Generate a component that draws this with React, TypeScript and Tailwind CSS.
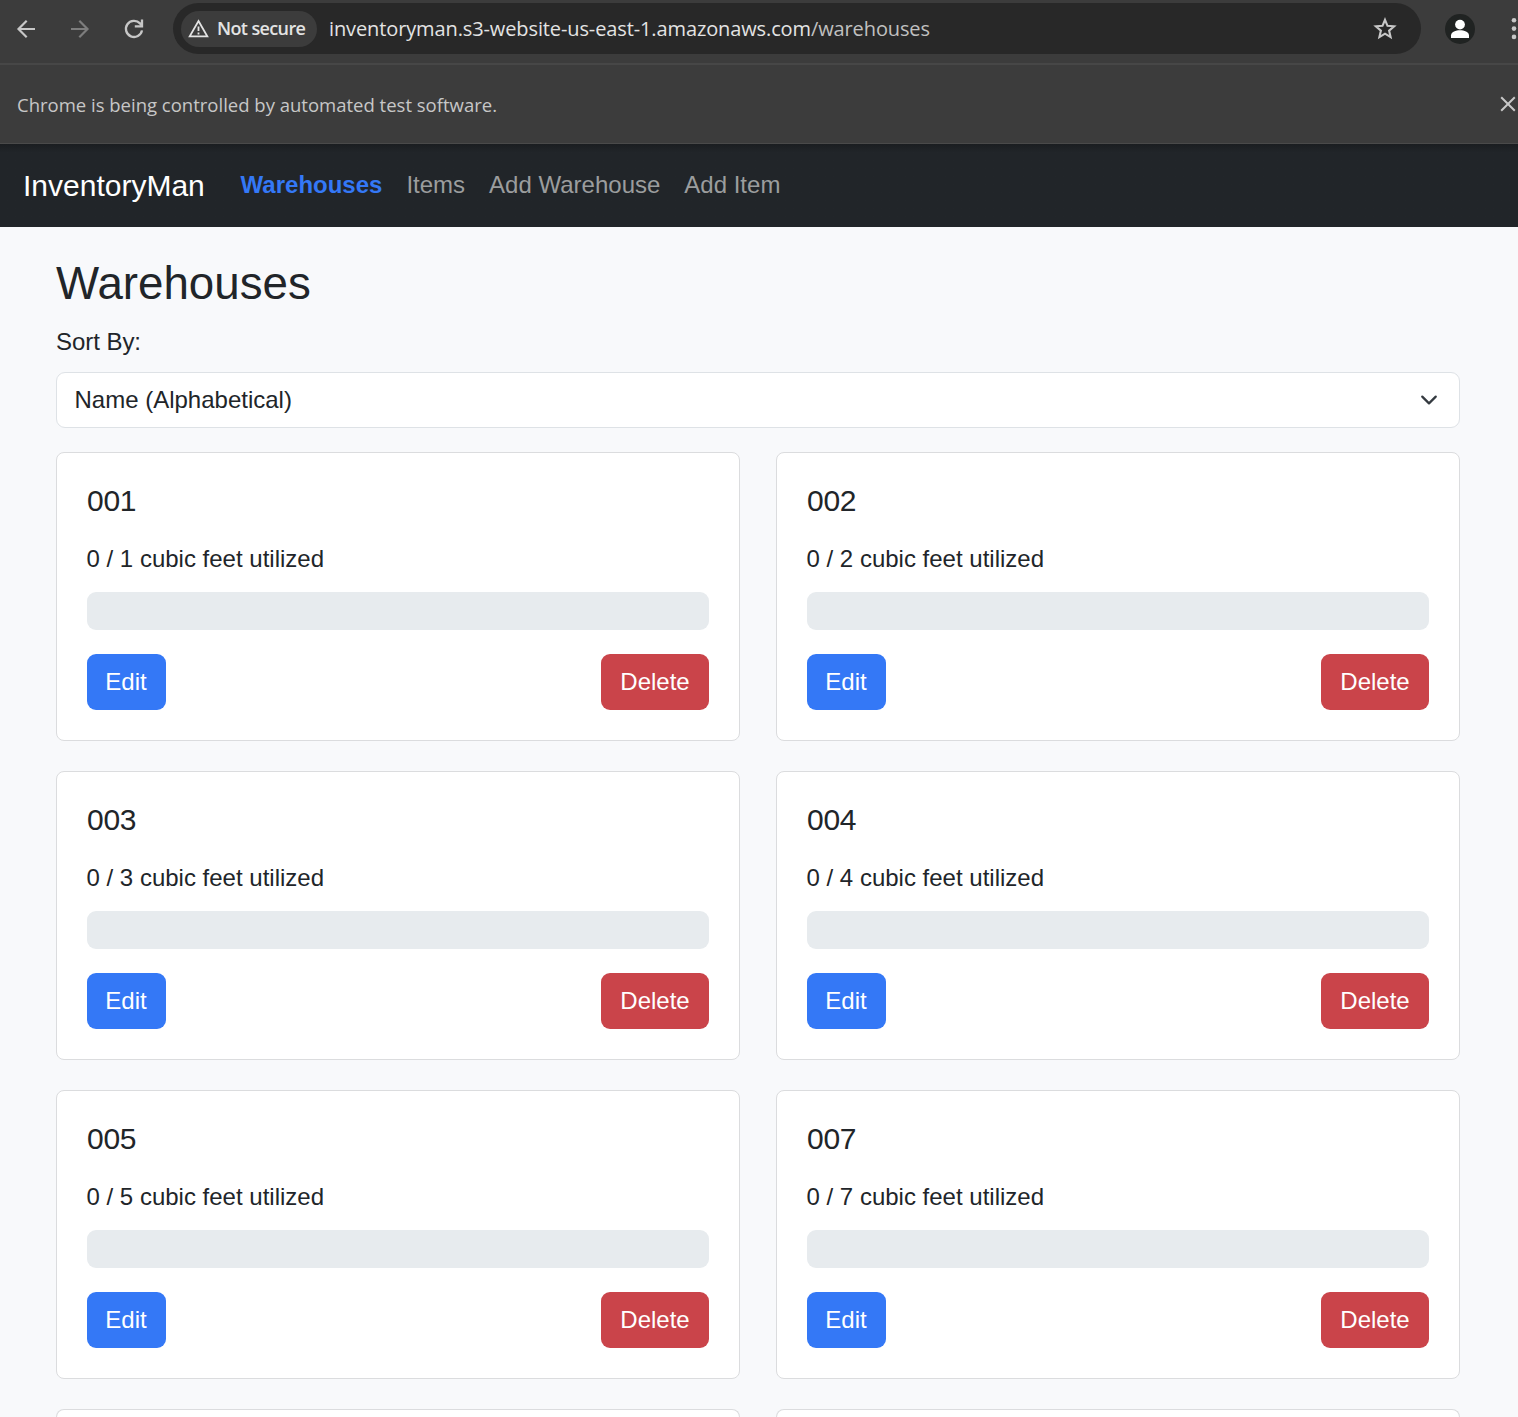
const warehouses = [
  { name: "001", capacity: 1 },
  { name: "002", capacity: 2 },
  { name: "003", capacity: 3 },
  { name: "004", capacity: 4 },
  { name: "005", capacity: 5 },
  { name: "007", capacity: 7 },
];

function Toolbar() {
  return (
    <div className="flex h-[65px] items-start border-b-2 border-[#474747] bg-[#3c3c3c] font-['Open_Sans',sans-serif]">
      <div className="flex h-[57px] w-[173px] shrink-0 items-center pl-[11px]">
        <svg className="h-[30px] w-[30px]" viewBox="0 0 30 30" fill="none" stroke="#c7c7c7" strokeWidth="2.2">
          <path d="M24 15H7.5M15.7 6.8 7.5 15l8.2 8.2" />
        </svg>
        <svg className="ml-6 h-[30px] w-[30px]" viewBox="0 0 30 30" fill="none" stroke="#7d7d7d" strokeWidth="2.2">
          <path d="M6 15h16.5M14.3 6.8l8.2 8.2-8.2 8.2" />
        </svg>
        <svg className="ml-6 h-[30px] w-[30px]" viewBox="0 0 30 30" fill="none" stroke="#c7c7c7" strokeWidth="2.3">
          <path d="M23 16.4A8.1 8.1 0 1 1 21 9.4l1.8 2" />
          <path d="M23 5.6v6.8h-7.2" />
        </svg>
      </div>
      <div className="mt-[3px] flex h-[51px] w-[1248px] shrink-0 items-center rounded-full bg-[#282828] pl-[8px]">
        <div className="flex h-[36px] w-[136px] items-center rounded-full bg-[#3c3c3c] pl-[7px]">
          <svg className="h-[20px] w-[21px] shrink-0" viewBox="0 0 21 20" fill="none" stroke="#e3e3e3" strokeWidth="1.8">
            <path d="M10.5 2 19.3 17.3H1.7Z" />
            <path d="M10.5 7.5v4.6M10.5 13.5v2" />
          </svg>
          <span className="ml-[8px] text-[18px] font-semibold tracking-[-0.62px] whitespace-nowrap text-[#e3e3e3]">Not secure</span>
        </div>
        <span className="ml-[12px] text-[20px] tracking-[-0.115px] whitespace-nowrap text-[#e3e3e3]">
          inventoryman.s3-website-us-east-1.amazonaws.com<span className="text-[#c0c0c0]">/warehouses</span>
        </span>
        <svg className="mr-[24px] ml-auto h-[24px] w-[24px]" viewBox="0 0 24 24" fill="none" stroke="#c7c7c7" strokeWidth="2.1">
          <path d="M12 2.8 14.5 8.8l6.6.5-5 4.3 1.5 6.5-5.6-3.4-5.6 3.4 1.5-6.5-5-4.3 6.6-.5Z" />
        </svg>
      </div>
      <div className="mt-[14px] ml-[24px] h-[30px] w-[30px] shrink-0 overflow-hidden rounded-full bg-[#202322]">
        <svg viewBox="0 0 30 30" fill="#fff">
          <circle cx="15" cy="10.6" r="4.9" />
          <path d="M6 24v-2.6C6 18 11 16.3 15 16.3s9 1.7 9 5.1V24Z" />
        </svg>
      </div>
      <svg className="mt-[16px] ml-[36px] h-[24px] w-[7px] shrink-0" viewBox="0 0 7 24" fill="#c7c7c7">
        <circle cx="3" cy="4.3" r="2.3" />
        <circle cx="3" cy="12.6" r="2.3" />
        <circle cx="3" cy="20.9" r="2.3" />
      </svg>
    </div>
  );
}

function InfoBar() {
  return (
    <div className="flex h-[79px] items-center border-b border-[#4a4a4a] bg-[#3c3c3c] pl-[17px] font-['Open_Sans',sans-serif]">
      <span className="mt-[2px] text-[18.5px] whitespace-nowrap text-[#c7c7c7]">
        Chrome is being controlled by automated test software.
      </span>
      <svg className="mr-[2px] ml-auto h-[16px] w-[16px]" viewBox="0 0 16 16" fill="none" stroke="#c7c7c7" strokeWidth="2">
        <path d="m1.2 1.2 13.6 13.6M14.8 1.2 1.2 14.8" />
      </svg>
    </div>
  );
}

function Navbar() {
  return (
    <nav className="flex h-[83px] items-center bg-[#212529] bg-linear-to-b from-[#1a1d20] to-[#212529] to-10% pl-[23px]">
      <span className="w-[217.6px] text-[30px] text-white">InventoryMan</span>
      <div className="mb-[2px] flex gap-6 text-[24px] text-[#9b9d9e]">
        <span className="font-bold text-[#3478f6]">Warehouses</span>
        <span>Items</span>
        <span>Add Warehouse</span>
        <span>Add Item</span>
      </div>
    </nav>
  );
}

function Card({ name, capacity }: { name: string; capacity: number }) {
  return (
    <article className="h-[289px] rounded-[8px] border border-[#dbdcde] bg-white px-[30px] pt-[30px]">
      <h5 className="text-[30px] leading-[36px] tracking-[-0.3px]">{name}</h5>
      <p className="-ml-[0.5px] mt-[22px] text-[24px] leading-[36px]">0 / {capacity} cubic feet utilized</p>
      <div className="mt-[15px] h-[38px] rounded-[9px] bg-[#e7ebee]" />
      <div className="mt-6 flex justify-between text-[24px] text-white">
        <button className="h-[56px] w-[79px] rounded-[9px] bg-[#3478f6] pr-[1px]">Edit</button>
        <button className="h-[56px] w-[108px] rounded-[9px] bg-[#ca444a]">Delete</button>
      </div>
    </article>
  );
}

export default function App() {
  return (
    <div className="h-[1417px] w-[1518px] overflow-hidden bg-[#f8f9fb] font-['Liberation_Sans',Arial,sans-serif] text-[#212529]">
      <Toolbar />
      <InfoBar />
      <Navbar />
      <main className="pt-[30px] pr-[58px] pl-[56px]">
        <h2 className="text-[45.7px] leading-[54px]">Warehouses</h2>
        <label className="mt-[13px] mb-[12px] block text-[24px] leading-[36px] tracking-[-0.05px]">Sort By:</label>
        <div className="flex h-[56px] items-center rounded-[9px] border border-[#dee2e6] bg-white pr-[21px] pl-[17.5px] text-[24px]">
          <span>Name (Alphabetical)</span>
          <svg
            className="ml-auto h-[18px] w-[18px]"
            viewBox="0 0 16 16"
            fill="none"
            stroke="#343a40"
            strokeWidth="2"
            strokeLinecap="round"
            strokeLinejoin="round"
          >
            <path d="m2 5 6 6 6-6" />
          </svg>
        </div>
        <section className="mt-6 grid grid-cols-2 gap-x-9 gap-y-[30px]">
          {warehouses.map((w) => (
            <Card key={w.name} name={w.name} capacity={w.capacity} />
          ))}
          <div className="h-[8px] rounded-t-[8px] border border-b-0 border-[#dbdcde] bg-white" />
          <div className="h-[8px] rounded-t-[8px] border border-b-0 border-[#dbdcde] bg-white" />
        </section>
      </main>
    </div>
  );
}
